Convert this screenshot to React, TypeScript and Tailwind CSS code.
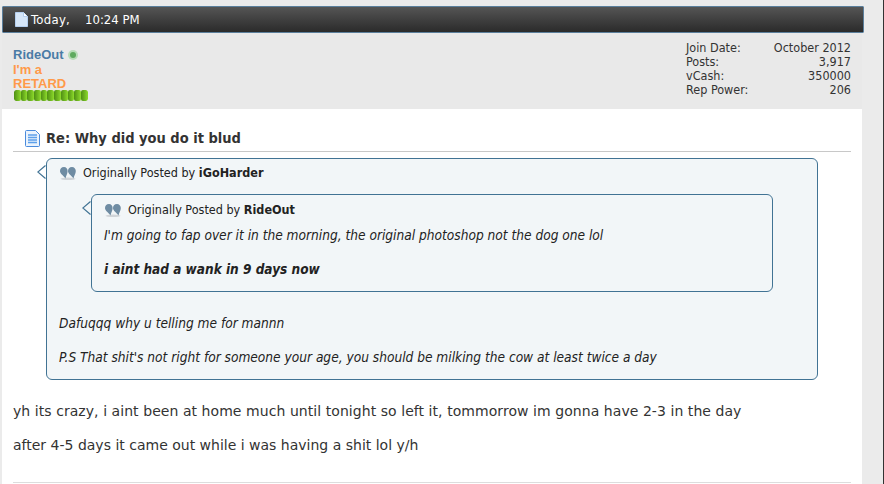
const tahoma = "font-['DejaVu_Sans_Condensed','DejaVu_Sans',sans-serif]";

function PageIcon({ className }: { className?: string }) {
  return (
    <svg viewBox="0 0 13 15" className={className}>
      <path d="M.5 .5H8.500L12.500 4.500V14.500H.5Z" fill="#d6e6f8" stroke="#b4cff0" />
      <path d="M8.500 .5V4.500H12.500" fill="#fff" stroke="#b4cff0" />
    </svg>
  );
}

function PostIcon() {
  return (
    <svg viewBox="0 0 15 17" className="h-[17px] w-[15px] shrink-0">
      <path d="M.5 1.500Q.5 .5 1.500 .5H10.500L14.500 4.500V15.500Q14.500 16.500 13.500 16.500H1.500Q.5 16.500 .5 15.500Z" fill="#eaf3fd" stroke="#4a8bdc" />
      <path d="M3 5H12M3 7.500H12M3 10H12M3 12.500H12" stroke="#5da0ea" strokeWidth="1.400" />
    </svg>
  );
}

function QuoteIcon() {
  return (
    <svg viewBox="0 0 16 13" className="h-[13px] w-[16px] shrink-0">
      <ellipse cx="8" cy="11.800" rx="7.500" ry="1.200" fill="#d0d4d8" />
      <path d="M4 0C1.300 0 0 2 0 4C0 6.800 3 8 5.500 11.500C6 8.500 7.600 6.800 7.600 4C7.600 1.800 6.200 0 4 0Z" fill="#6f8ca3" />
      <path d="M12 0C9.300 0 8 2 8 4C8 6.800 11 8 13.500 11.500C14 8.500 15.800 6.800 15.800 4C15.800 1.800 14.200 0 12 0Z" fill="#6f8ca3" />
    </svg>
  );
}

function QuoteBox({ author, className, headClass, children }: { author: string; className: string; headClass: string; children: React.ReactNode }) {
  return (
    <div className={`relative rounded-[6px] border border-[#417394] bg-[#f2f6f8] text-[#222] ${className}`}>
      <svg viewBox="0 0 9 14" className="absolute left-[-10px] top-[6px] h-[14px] w-[9px]">
        <path d="M8.500 .5L.8 7L8.500 13.500" fill="none" stroke="#417394" strokeWidth="1.200" />
      </svg>
      <div className={`flex items-center gap-[7px] pl-[13px] text-[12.500px] leading-[16px] ${tahoma} ${headClass}`}>
        <QuoteIcon />
        <span>
          Originally Posted by <b className="font-bold">{author}</b>
        </span>
      </div>
      {children}
    </div>
  );
}

const stats = [
  ["Join Date:", "October 2012"],
  ["Posts:", "3,917"],
  ["vCash:", "350000"],
  ["Rep Power:", "206"],
];

export default function App() {
  return (
    <div className="h-[484px] w-[884px] overflow-hidden border-r border-[#333] bg-[#ebebeb] pl-[2px] pt-[6px]">
      <div className="w-[862px]">
        <div className={`flex h-[27px] w-[862px] items-center rounded-[1px] border border-[#5b7f9c] bg-gradient-to-b from-[#555] to-[#2b2b2b] pl-[12px] text-[13px] text-white ${tahoma}`}>
          <PageIcon className="h-[15px] w-[13px]" />
          <span className="ml-[3px] w-[54px] tracking-[0.3px]">Today,</span>
          <span>10:24 PM</span>
        </div>

        <div className="flex h-[76px] w-[860px] justify-between bg-[#e9e9e9] pl-[11px] pr-[11px]">
          <div className="pt-[15px]">
            <div className="flex items-center gap-[4px]">
              <span className="font-['Liberation_Sans',sans-serif] text-[13px] font-bold leading-[14px] text-[#4a7ba6]">RideOut</span>
              <span className="flex h-[10px] w-[10px] items-center justify-center rounded-full bg-[#b7dcb7]">
                <span className="h-[6px] w-[6px] rounded-full bg-[#5faa5f]" />
              </span>
            </div>
            <div className="mt-[1px] w-[60px] font-['Liberation_Sans',sans-serif] text-[13px] font-bold leading-[14px] text-[#ff9a4a]">
              I'm a RETARD
            </div>
            <div className="-mt-[1px] ml-[1px] flex h-[11px] w-[74px] overflow-hidden rounded-[2px]">
              {Array.from({ length: 11 }).map((_, i) => (
                <span key={i} className="h-full w-[6.700px] shrink-0 rounded-[2px] bg-gradient-to-r from-[#4f8f14] to-[#8edb2c]" />
              ))}
            </div>
          </div>

          <div className={`mt-[8px] grid h-[56px] w-[165px] grid-cols-[auto_1fr] auto-rows-[14px] text-[12.500px] text-[#333] ${tahoma}`}>
            {stats.map(([label, value]) => [
              <span key={label} className="leading-[14px]">{label}</span>,
              <span key={value} className="text-right leading-[14px]">{value}</span>,
            ])}
          </div>
        </div>

        <div className="h-[375px] w-[860px] bg-white pl-[11px] pr-[11px]">
          <div className="flex h-[43px] items-end gap-[6px] border-b border-[#c8c8c8] pb-[4px] pl-[12px]">
            <PostIcon />
            <span className={`text-[14.500px] font-bold leading-[18px] text-[#333] ${tahoma}`}>Re: Why did you do it blud</span>
          </div>

          <QuoteBox author="iGoHarder" headClass="pt-[6px]" className="ml-[33px] mt-[6px] h-[222px] w-[772px]">
            <QuoteBox author="RideOut" headClass="pt-[7px]" className="ml-[44px] mt-[13px] h-[98px] w-[682px]">
              <p className={`pl-[12px] pt-[8px] text-[13.600px] italic leading-[18px] ${tahoma}`}>
                I'm going to fap over it in the morning, the original photoshop not the dog one lol
              </p>
              <p className={`pl-[12px] pt-[16px] text-[13.500px] font-bold italic leading-[18px] ${tahoma}`}>
                i aint had a wank in 9 days now
              </p>
            </QuoteBox>
            <p className={`pl-[12px] pt-[22px] text-[13.600px] italic leading-[18px] ${tahoma}`}>
              Dafuqqq why u telling me for mannn
            </p>
            <p className={`pl-[12px] pt-[16px] text-[13.600px] italic leading-[18px] ${tahoma}`}>
              P.S That shit's not right for someone your age, you should be milking the cow at least twice a day
            </p>
          </QuoteBox>

          <p className="pt-[22px] font-['DejaVu_Sans',sans-serif] text-[14px] leading-[19px] tracking-[0.06px] text-[#333]">
            yh its crazy, i aint been at home much until tonight so left it, tommorrow im gonna have 2-3 in the day
          </p>
          <p className="pt-[15px] font-['DejaVu_Sans',sans-serif] text-[14px] leading-[19px] text-[#333]">
            after 4-5 days it came out while i was having a shit lol y/h
          </p>
          <div className="mt-[27px] border-t border-[#ddd]" />
        </div>
      </div>
    </div>
  );
}
